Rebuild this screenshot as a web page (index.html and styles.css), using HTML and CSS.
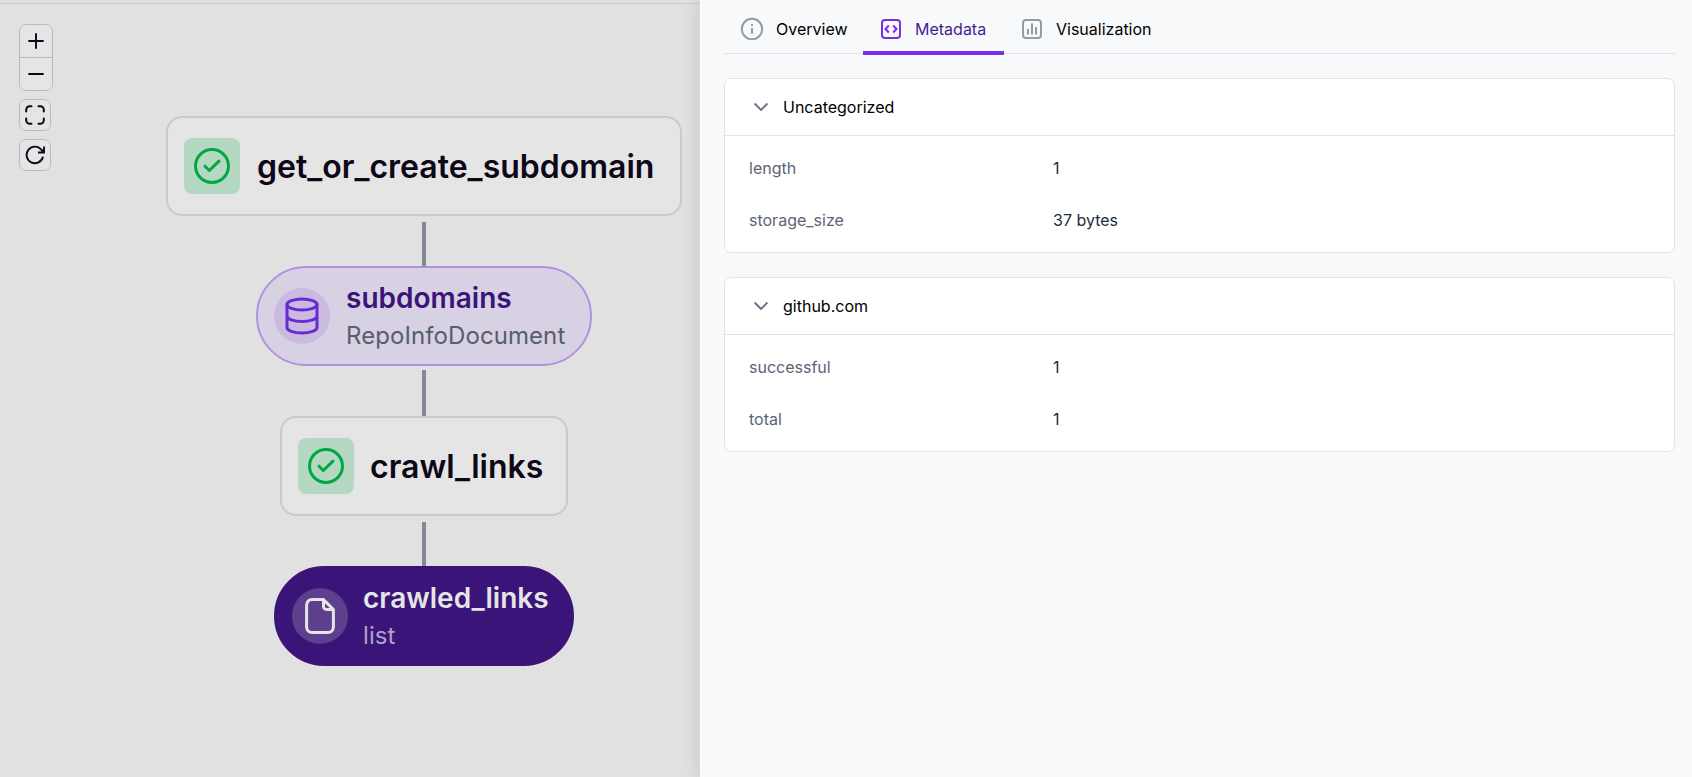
FILE: index.html
```
<!DOCTYPE html>
<html lang="en">
<head>
<meta charset="utf-8">
<title>Run metadata</title>
<link rel="stylesheet" href="styles.css">
</head>
<body>
<div class="app">
  <main class="canvas">
    <div class="controls">
      <div class="zoom-group">
        <button class="ctl" aria-label="Zoom in"><svg width="16" height="16" viewBox="0 0 16 16"><path d="M8 .3v15.4M.3 8h15.4" stroke-width="1.9"/></svg></button>
        <button class="ctl" aria-label="Zoom out"><svg width="16" height="16" viewBox="0 0 16 16"><path d="M.3 8h15.4" stroke-width="1.9"/></svg></button>
      </div>
      <button class="ctl single" aria-label="Fit view"><svg width="20" height="20" viewBox="0 0 20 20"><path d="M1.2 6.5V4.7a3.5 3.5 0 0 1 3.5-3.5h1.8M13.500 1.200h1.800a3.500 3.500 0 0 1 3.500 3.500v1.800M18.800 13.500v1.800a3.500 3.500 0 0 1-3.500 3.500h-1.800M6.500 18.800H4.700a3.500 3.500 0 0 1-3.500-3.500v-1.800" stroke-width="2" stroke-linecap="round"/></svg></button>
      <button class="ctl single" aria-label="Refresh"><svg width="20" height="20" viewBox="0 0 20 20"><path d="M18 11.800A8.300 8.300 0 1 1 16.600 5l1.800 2M19 1.500v6h-6" stroke-width="1.900"/></svg></button>
    </div>

    <div class="graph">
      <div class="node step w-516">
        <span class="badge ok"><svg width="36" height="36" viewBox="0 0 36 36"><circle cx="18" cy="18" r="16.500"/><path d="M11 18.200l4.300 4.300L25 13.200"/></svg></span>
        <span class="step-name">get_or_create_subdomain</span>
      </div>
      <div class="edge after-step"></div>
      <div class="node artifact w-336">
        <span class="badge data"><svg width="36" height="38" viewBox="0 0 36 38"><ellipse cx="18" cy="7.500" rx="15" ry="5.500"/><path d="M3 7.500v23C3 33.500 9.700 36 18 36s15-2.500 15-5.500v-23M3 19c0 3 6.700 5.500 15 5.500S33 22 33 19"/></svg></span>
        <span class="labels"><span class="name">subdomains</span><span class="type">RepoInfoDocument</span></span>
      </div>
      <div class="edge after-artifact"></div>
      <div class="node step w-288">
        <span class="badge ok"><svg width="36" height="36" viewBox="0 0 36 36"><circle cx="18" cy="18" r="16.500"/><path d="M11 18.200l4.300 4.300L25 13.200"/></svg></span>
        <span class="step-name">crawl_links</span>
      </div>
      <div class="edge after-step"></div>
      <div class="node artifact selected w-300">
        <span class="badge file"><svg width="30" height="36" viewBox="0 0 30 36"><path d="M18.500 1.600H7A5.400 5.400 0 0 0 1.600 7v22A5.400 5.400 0 0 0 7 34.400h16a5.400 5.400 0 0 0 5.400-5.400V11.500zM18.500 1.600v6.800a3 3 0 0 0 3 3h6.900"/></svg></span>
        <span class="labels"><span class="name">crawled_links</span><span class="type">list</span></span>
      </div>
    </div>
  </main>

  <aside class="panel">
    <nav class="tabs">
      <a class="tab"><svg width="24" height="24" viewBox="0 0 24 24"><circle cx="12" cy="12" r="10.200"/><path d="M12 11.200v5.600M12 7v2" stroke-width="2"/></svg><span>Overview</span></a>
      <a class="tab active"><svg width="24" height="24" viewBox="0 0 24 24"><rect x="3" y="3" width="18" height="18" rx="3"/><path d="M9.800 8.500L6.500 12l3.300 3.500M14.200 8.500l3.300 3.500-3.300 3.500"/></svg><span>Metadata</span></a>
      <a class="tab"><svg width="24" height="24" viewBox="0 0 24 24"><rect x="3" y="3" width="18" height="18" rx="3"/><path d="M8 12v5.500M12 6.500v11M16 10v7.500"/></svg><span>Visualization</span></a>
    </nav>

    <section class="card">
      <h2 class="card-head"><svg width="24" height="24" viewBox="0 0 24 24"><path d="M5.600 8.500L12 15l6.400-6.500"/></svg>Uncategorized</h2>
      <dl class="rows">
        <dt>length</dt><dd>1</dd>
        <dt>storage_size</dt><dd>37 bytes</dd>
      </dl>
    </section>

    <section class="card">
      <h2 class="card-head"><svg width="24" height="24" viewBox="0 0 24 24"><path d="M5.600 8.500L12 15l6.400-6.500"/></svg>github.com</h2>
      <dl class="rows">
        <dt>successful</dt><dd>1</dd>
        <dt>total</dt><dd>1</dd>
      </dl>
    </section>
  </aside>
</div>
</body>
</html>
```
FILE: styles.css
```
* { box-sizing: border-box; }
body {
  margin: 0;
  font-family: Inter, "Liberation Sans", sans-serif;
  font-size: 16px;
  color: #0d0717;
}
svg { display: block; flex: none; fill: none; stroke: currentColor; stroke-width: 2; }

.app { display: flex; height: 777px; overflow: hidden; }

/* canvas */
.canvas {
  position: relative;
  flex: none;
  width: 699px;
  padding-top: 3px;
  background: #e1e1e1;
}
.canvas::before { content: ""; display: block; height: 1px; background: #c8c8ca; }
.controls {
  position: absolute;
  left: 19px;
  top: 24px;
  display: flex;
  flex-direction: column;
  align-items: flex-start;
  gap: 8px;
}
.zoom-group { border: 1px solid #b8bac3; border-radius: 7px; overflow: hidden; }
.ctl {
  display: flex;
  align-items: center;
  justify-content: center;
  width: 32px;
  height: 32px;
  padding: 0;
  border: 0;
  background: #e5e5e5;
  color: #0d0717;
}
.zoom-group .ctl + .ctl { height: 33px; border-top: 1px solid #b8bac3; }
.single { border: 1px solid #b8bac3; border-radius: 7px; }

.graph {
  display: flex;
  flex-direction: column;
  align-items: center;
  width: 516px;
  margin: 112px 0 0 166px;
}
.node { display: flex; align-items: center; gap: 16px; height: 100px; padding-left: 16px; border: 2px solid; white-space: nowrap; }
.w-516 { width: 516px; gap: 17px; }
.w-336 { width: 336px; }
.w-288 { width: 288px; }
.w-300 { width: 300px; gap: 15px; }
.step { background: #e5e5e5; border-color: #c9c9cf; border-radius: 16px; }
.step-name { padding-top: 2px; font-size: 32px; line-height: 40px; font-weight: 600; }
.badge { display: flex; align-items: center; justify-content: center; width: 56px; height: 56px; flex: none; border-radius: 50%; }
.badge svg { stroke-width: 3; stroke-linecap: round; stroke-linejoin: round; }
.ok { background: #b5d8c2; color: #00a843; border-radius: 8px; }
.edge { width: 4px; background: #848995; }
.after-step { height: 44px; margin-top: 6px; }
.after-artifact { height: 46px; margin-top: 4px; }
.artifact { background: #d8d0e3; border-color: #b093e0; border-radius: 50px; }
.data { background: #cabae0; color: #692ad4; }
.labels { display: flex; flex-direction: column; padding-top: 1px; }
.name { font-size: 28px; line-height: 38px; font-weight: 600; color: #3a1478; }
.type { font-size: 24px; line-height: 37px; letter-spacing: .08px; color: #575e6c; }
.selected { background: #3a1478; border-color: #3a1478; }
.file { background: #5c3f8d; color: #e5e5e5; }
.selected .name { color: #e5e5e5; }
.selected .type { color: #b0a1c9; }

/* side panel */
.panel {
  position: relative;
  flex: 1;
  padding: 0 17px 0 24px;
  background: #f8f9fb;
  border-left: 1px solid #d9dbe0;
  box-shadow: 0 0 16px rgba(0, 0, 0, .14);
}
.tabs { display: flex; height: 54px; border-bottom: 1px solid #e1e3e8; }
.tab { position: relative; display: flex; align-items: center; gap: 12px; width: 139px; height: 58px; padding-left: 16px; color: #000; }
.tab svg { color: #949ba8; }
.tab.active { width: 141px; color: #431d93; }
.tab.active svg { color: #7a2eed; }
.tab.active::after { content: ""; position: absolute; left: 0; right: 0; top: 51px; height: 4px; background: #7a2eed; }

.card { margin-top: 24px; background: #fff; border: 1px solid #e1e3e8; border-radius: 7px; }
.card-head {
  display: flex;
  align-items: center;
  gap: 10px;
  height: 57px;
  margin: 0;
  padding-left: 24px;
  border-bottom: 1px solid #e1e3e8;
  font-size: 16px;
  font-weight: 400;
  color: #000;
}
.card-head svg { color: #667080; stroke-width: 1.8; }
.rows {
  display: grid;
  grid-template-columns: 304px 1fr;
  grid-auto-rows: 52px;
  align-items: center;
  margin: 0;
  padding: 6px 24px;
}
.rows dt { color: #5b6475; }
.rows dd { margin: 0; color: #222c3c; }
```
